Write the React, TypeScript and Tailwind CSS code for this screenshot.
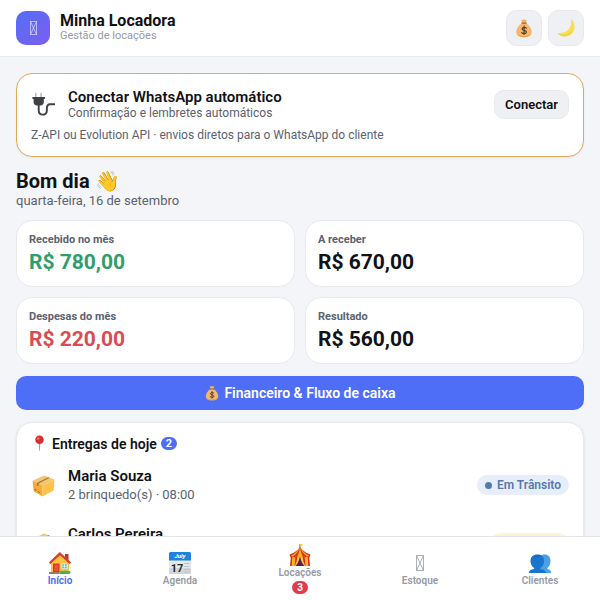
import type { ReactNode } from 'react';

interface IconProps {
  className: string;
}

const MoneyBagIcon = ({ className }: IconProps) => (
  <svg viewBox="0 0 20 20" className={className} aria-hidden="true">
    <path d="M7 1.5 8.6 2l1.4-.8 1.5.8 1.5-.5-1.6 4H8.6Z" fill="#efb56e" />
    <path d="M8.4 5h3.3c3 1.700 6 5 6 9 0 3.500-2.700 5.200-7.700 5.200S2.300 17.500 2.300 14c0-4 3-7.300 6.100-9Z" fill="#f6b76c" />
    <path d="M4 16.500c3 2 9 2 12 0-1 2-3 2.700-6 2.700s-5-.7-6-2.700Z" fill="#e59d52" />
    <path d="M7.900 5.100h4.300" stroke="#9b6537" strokeWidth="1.300" strokeLinecap="round" />
    <path d="M12.300 10.200c-1-1.200-4.200-1.200-4.200.7 0 2 4.300 1.100 4.300 3.200 0 1.900-3.600 1.900-4.700.5M10.100 8.200v8.200" fill="none" stroke="#54402b" strokeWidth="1.200" strokeLinecap="round" />
  </svg>
);

const MoonIcon = ({ className }: IconProps) => (
  <svg viewBox="0 0 20 20" className={className} aria-hidden="true">
    <path d="M14.800.8c4 3.200 5.200 9.200 2.200 13.600-3.500 5-11.500 5.600-16 .6 5.800.6 10-1.300 12.300-4.700 1.900-2.800 2.200-6 1.500-9.500Z" fill="#f8df57" />
    <path d="M2.500 16.200c5.500 1.400 11-.3 14.500-4.400-2.500 6.500-9.700 8.400-14.500 4.400Z" fill="#efd046" />
  </svg>
);

const PlugIcon = ({ className }: IconProps) => (
  <svg viewBox="0 0 26 26" className={className} aria-hidden="true">
    <path d="M5 1v5M10.500 1v5" stroke="#b9bcc0" strokeWidth="1.600" />
    <path d="M1.500 5.200h13v2h-1.200v3.600c0 1.600-1.800 2.800-3 3.200H5.700c-1.500-.5-3-1.600-3-3.200V7.200H1.500Z" fill="#3f4145" />
    <path d="M8 13v6c0 6 8.500 6 8.500.5v-3c0-2 1.200-3.800 3-3.800H25" fill="none" stroke="#3f4145" strokeWidth="2" />
  </svg>
);

const PinIcon = ({ className }: IconProps) => (
  <svg viewBox="0 0 16 16" className={className} aria-hidden="true">
    <path d="M7.200 7h1.600L8.300 15h-.6Z" fill="#9aa5ad" />
    <circle cx="8" cy="4.500" r="4" fill="#dd2d27" />
    <circle cx="6.800" cy="3.200" r="1.200" fill="#f2766e" />
  </svg>
);

const BoxIcon = ({ className }: IconProps) => (
  <svg viewBox="0 0 24 24" className={className} aria-hidden="true">
    <path d="m1.500 7.500 11-5 10 3.700L11 12Z" fill="#f3c673" />
    <path d="m1.500 7.500 9.500 4.500v10.500l-8.500-5Z" fill="#f5ab34" />
    <path d="M11 12 22.500 6.200l-.7 10.500L11 22.500Z" fill="#ffc24a" />
    <path d="m5.700 9.500 11-5.400 1.200.5-10.700 5.500v2.400l-1.500-.8Z" fill="#a56c34" />
    <path d="m3.500 15 1.500.8v1.400l-1.500-.8ZM6.500 17.500l2 1v.8l-2-1Z" fill="#8f5d25" />
  </svg>
);

const HouseIcon = ({ className }: IconProps) => (
  <svg viewBox="0 0 24 24" className={className} aria-hidden="true">
    <path d="M17 3h3.500v7H17Z" fill="#b83a2d" />
    <path d="M3 11.500 12 3l9 8.500v10H3Z" fill="#fcc43c" />
    <path d="m.8 11.600 11-10.600 11.400 10.600-1.500 1.300L12 4.300 2.300 12.900Z" fill="#d93c2e" />
    <path d="M5 12.500h6.500v9H5Z" fill="#d9352b" />
    <path d="M6.300 13.700h4v6.500h-4Z" fill="#ed5039" />
    <path d="M13.500 12.500h6v5.500h-6Z" fill="#f8f0cb" />
    <path d="M14.300 13.300h4.400v3.900h-4.400Z" fill="#54b9db" />
    <path d="M16.500 13.300v3.900M14.300 15.200h4.400" stroke="#fff" strokeWidth=".7" />
    <path d="M1 21h10.500v2H1Z" fill="#9b7b66" />
    <path d="M11.500 20.500c2-1.500 3 0 4.500-.7 2-.8 3 .7 5 0 2 0 2 3.200 0 3.200h-9.500Z" fill="#4caf50" />
  </svg>
);

const CalendarIcon = ({ className }: IconProps) => (
  <svg viewBox="0 0 24 24" className={className} aria-hidden="true">
    <rect x="1" y="1" width="22" height="22" rx="1.500" fill="#e6e8ea" />
    <path d="M1 17h22v6H1Z" fill="#d3d6d8" />
    <path d="M2.500 1h19A1.500 1.500 0 0 1 23 2.500V9.500H1V2.500A1.500 1.500 0 0 1 2.500 1Z" fill="#2082dc" />
    <path d="M16 12.500h5.500M16 15.500h5.500M16 18.500h5.500M16 21h5.500" stroke="#bfc3c6" />
    <text x="12" y="7" textAnchor="middle" fill="#fff" fontSize="6" fontWeight="700" fontStyle="italic">July</text>
    <text x="9" y="21" textAnchor="middle" fill="#292d30" fontSize="11" fontWeight="700">17</text>
  </svg>
);

const TentIcon = ({ className }: IconProps) => (
  <svg viewBox="0 0 24 24" className={className} aria-hidden="true">
    <path d="M12 6V1" stroke="#82512d" />
    <path d="M12 .8 15.500 2 12 3.300Z" fill="#fbc02d" />
    <path d="M3 12h18l1 11H2Z" fill="#d9341f" />
    <path d="M4.500 12h3L6.500 23H3.800ZM16.500 12h3l.7 11h-2.700Z" fill="#ffb51f" />
    <path d="M12 12 17 23H7Z" fill="#5b1c52" />
    <path d="M9.500 12h2.500c-.4 4-1.700 8-4.300 11H6.800c1.800-3.500 2.500-7 2.700-11ZM14.500 12H12c.4 4 1.700 8 4.300 11h.9c-1.800-3.500-2.500-7-2.700-11Z" fill="#ffcb38" />
    <path d="M12 4c2.500 3.500 6 6 10.500 7.500l-1 3-2.500-1-2.200 1.300L14.400 13 12 14.500 9.600 13l-2.400 1.800L5 13.500l-2.500 1-1-3C6 10 9.500 7.500 12 4Z" fill="#d93a20" />
    <path d="M12 4C10.500 8 8.500 10.500 5 13.500L3 12.700C7.500 10.500 10 7.500 12 4ZM12 4c1.500 4 3.500 6.500 7 9.500l2-.8C16.500 10.500 14 7.500 12 4ZM12 4c-.5 3.500-1 6-2.400 9l2.400 1.500 2.400-1.500C13 10 12.500 7.500 12 4Z" fill="#ffb51f" />
  </svg>
);

const PeopleIcon = ({ className }: IconProps) => (
  <svg viewBox="0 0 24 24" className={className} aria-hidden="true">
    <path d="M11 9.500c0-4 2-6 5.500-6 3.800 0 6 2.300 6 6.500 0 3.300-1.300 5.500-3.200 7v1c2.700.6 3.900 1.800 3.900 4H10Z" fill="#4b9fe6" />
    <path d="M2.500 10c0-4.300 2.500-6.500 6.800-6.500s6.800 2.200 6.800 6.500c0 3.300-1.600 5.500-3.800 7v1c3.700.6 5.300 1.500 5.700 4H.7c.3-2.500 2-3.400 5.500-4v-1c-2.200-1.500-3.700-3.700-3.700-7Z" fill="#1976cf" />
    <path d="M4 9c1.500-3 5-4.500 10-3.500-2-1.500-8-1.800-10 3.500Z" fill="#0e5dab" />
  </svg>
);

// Glyph the device font does not have
const MissingGlyph = ({ className }: IconProps) => (
  <svg viewBox="0 0 8 16" className={className} fill="none" stroke="currentColor" strokeWidth=".8" aria-hidden="true">
    <path d="M.5.5h7v15h-7Zl7 15M7.500.5l-7 15" />
  </svg>
);

interface SummaryCardProps {
  label: string;
  value: string;
  color: string;
}

const SummaryCard = ({ label, value, color }: SummaryCardProps) => (
  <div className="rounded-2xl border border-[#e7e9ed] bg-white px-3 pt-[11px] pb-2.5">
    <p className="text-[11px] leading-4 font-bold text-[#5b6270]">{label}</p>
    <p className={`text-[21px] leading-7 font-bold ${color}`}>{value}</p>
  </div>
);

interface DeliveryProps {
  name: string;
  detail: string;
  status: string;
  color: string;
}

const Delivery = ({ name, detail, status, color }: DeliveryProps) => (
  <li className="flex items-center gap-3 py-2.5">
    <BoxIcon className="size-[25px] shrink-0" />
    <div className="min-w-0 flex-1">
      <p className="text-[15px] leading-5 font-semibold">{name}</p>
      <p className="text-[13px] leading-[18px] text-[#5b6270]">{detail}</p>
    </div>
    <span className={`flex items-center gap-[5px] rounded-full px-2 text-xs leading-5 font-semibold ${color}`}>
      <span className="size-[7px] rounded-full bg-current" />
      {status}
    </span>
  </li>
);

interface NavItemProps {
  icon: ReactNode;
  label: string;
  active?: boolean;
  badge?: number;
}

const NavItem = ({ icon, label, active, badge }: NavItemProps) => (
  <button
    type="button"
    className={`flex flex-1 flex-col items-center justify-center text-[10px] font-semibold ${active ? 'text-[#4b67e8]' : 'text-[#969ba5]'}`}
  >
    {icon}
    <span className="leading-3">{label}</span>
    {badge && (
      <span className="mt-0.5 rounded-full bg-[#df3d49] px-[5px] text-[10px] leading-[13px] font-bold text-white">{badge}</span>
    )}
  </button>
);

export default function App() {
  return (
    <div className="flex h-screen flex-col bg-[#f4f5f8] font-[Roboto,sans-serif] text-[#111216]">
      <header className="flex items-center gap-2.5 border-b border-[#e7e9ed] bg-white px-4 py-2.5">
        <div className="flex size-[34px] items-center justify-center rounded-[10px] bg-linear-to-br from-[#4f6ef7] to-[#7c5cf0] text-white/80">
          <MissingGlyph className="h-3.5 w-[7px]" />
        </div>
        <div className="flex-1">
          <h1 className="text-base leading-4 font-bold">Minha Locadora</h1>
          <p className="text-[11px] leading-[14px] text-[#969ba5]">Gestão de locações</p>
        </div>
        <div className="flex gap-1.5">
          <button type="button" aria-label="Financeiro" className="flex size-9 items-center justify-center rounded-[10px] border border-[#e7e9ed] bg-[#eff0f3]">
            <MoneyBagIcon className="size-5" />
          </button>
          <button type="button" aria-label="Tema escuro" className="flex size-9 items-center justify-center rounded-[10px] border border-[#e7e9ed] bg-[#eff0f3]">
            <MoonIcon className="size-5" />
          </button>
        </div>
      </header>

      <main className="min-h-0 flex-1 overflow-y-auto px-4 py-4 [scrollbar-width:none]">
        <section className="rounded-2xl border border-[#e2a85c] bg-white px-3.5 pt-3.5 pb-3 shadow-xs">
          <div className="flex items-center gap-3">
            <PlugIcon className="size-[25px] shrink-0" />
            <div className="min-w-0 flex-1">
              <h2 className="text-[15px] leading-[18px] font-semibold">Conectar WhatsApp automático</h2>
              <p className="text-xs leading-[14px] text-[#5b6270]">Confirmação e lembretes automáticos</p>
            </div>
            <button type="button" className="rounded-[10px] border border-[#e7e9ed] bg-[#eff0f3] px-2.5 text-[13px] leading-[27px] font-semibold">
              Conectar
            </button>
          </div>
          <p className="mt-1.5 text-xs leading-[18px] text-[#5b6270]">Z-API ou Evolution API · envios diretos para o WhatsApp do cliente</p>
        </section>

        <section className="mt-3">
          <h2 className="text-xl leading-6 font-bold">Bom dia 👋</h2>
          <p className="text-[13px] leading-4 text-[#5b6270]">quarta-feira, 16 de setembro</p>
        </section>

        <section className="mt-[11px] grid grid-cols-2 gap-2.5">
          <SummaryCard label="Recebido no mês" value="R$ 780,00" color="text-[#2f9e6d]" />
          <SummaryCard label="A receber" value="R$ 670,00" color="text-[#111216]" />
          <SummaryCard label="Despesas do mês" value="R$ 220,00" color="text-[#d94c53]" />
          <SummaryCard label="Resultado" value="R$ 560,00" color="text-[#111216]" />
        </section>

        <button type="button" className="mt-3 flex h-[34px] w-full items-center justify-center gap-1 rounded-[10px] bg-[#4f6ef7] text-sm font-semibold text-white">
          <MoneyBagIcon className="size-4" />
          Financeiro &amp; Fluxo de caixa
        </button>

        <section className="mt-3 rounded-2xl border border-[#e7e9ed] bg-white p-3.5 pt-3 shadow-sm">
          <h2 className="flex items-center gap-1 text-sm leading-4 font-semibold">
            <PinIcon className="size-[17px]" />
            Entregas de hoje
            <span className="rounded-full bg-[#4f6ef7] px-[5px] text-[11px] leading-[13px] text-white">2</span>
          </h2>
          <ul className="mt-1">
            <Delivery name="Maria Souza" detail="2 brinquedo(s) · 08:00" status="Em Trânsito" color="bg-[#e7eef9] text-[#5579ad]" />
            <Delivery name="Carlos Pereira" detail="1 brinquedo(s) · 09:00" status="Pendente" color="bg-[#fff3d6] text-[#b7791f]" />
          </ul>
        </section>
      </main>

      <nav className="flex h-16 shrink-0 border-t border-[#e2e4e8] bg-white">
        <NavItem icon={<HouseIcon className="size-6" />} label="Início" active />
        <NavItem icon={<CalendarIcon className="size-6" />} label="Agenda" />
        <NavItem icon={<TentIcon className="size-6" />} label="Locações" badge={3} />
        <NavItem icon={<MissingGlyph className="my-1 h-4 w-2" />} label="Estoque" />
        <NavItem icon={<PeopleIcon className="size-6" />} label="Clientes" />
      </nav>
    </div>
  );
}
